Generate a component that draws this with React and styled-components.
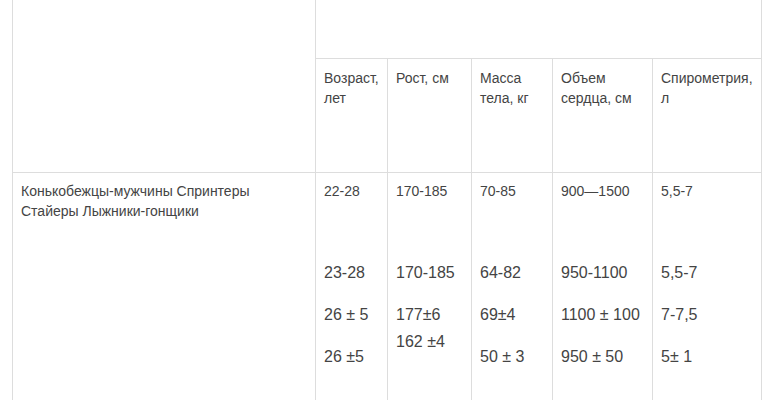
import React from "react";
import styled, { createGlobalStyle } from "styled-components";

const Global = createGlobalStyle`
  html, body { margin: 0; padding: 0; background: #fff; }
  body { font-family: "Liberation Sans", Arial, sans-serif; color: #444; overflow: hidden; }
`;

const Page = styled.div`
  padding-left: 12px;
  height: 400px;
  overflow: hidden;
`;

const Table = styled.div`
  width: 750px;
  box-sizing: border-box;
  border-left: 1px solid #ddd;
  display: grid;
  grid-template-columns: 303px 72px 84px 81px 100px 109px;
  grid-template-rows: 59px 114px auto;
`;

const Cell = styled.div`
  box-sizing: border-box;
  border-right: 1px solid #ddd;
  border-bottom: 1px solid #ddd;
  padding: ${(p) => (p.$data ? "8px 8px" : "9px 8px")};
  font-size: 14px;
  line-height: 20px;
  white-space: nowrap;
  grid-row: ${(p) => p.$row || "auto"};
  grid-column: ${(p) => p.$col || "auto"};
  min-height: ${(p) => (p.$data ? "300px" : "0")};
`;

const Values = styled.div`
  margin-top: 58px;
`;

const Value = styled.p`
  margin: 0 0 15px;
  font-size: 16px;
  line-height: 27px;
`;

const headers = [
  ["Возраст,", "лет"],
  ["Рост, см"],
  ["Масса", "тела, кг"],
  ["Объем", "сердца, см"],
  ["Спирометрия,", "л"],
];

const data = [
  { lead: "22-28", values: [["23-28"], ["26 ± 5"], ["26 ±5"]] },
  { lead: "170-185", values: [["170-185"], ["177±6", "162 ±4"]] },
  { lead: "70-85", values: [["64-82"], ["69±4"], ["50 ± 3"]] },
  { lead: "900—1500", values: [["950-1100"], ["1100 ± 100"], ["950 ± 50"]] },
  { lead: "5,5-7", values: [["5,5-7"], ["7-7,5"], ["5± 1"]] },
];

const Lines = ({ lines }) =>
  lines.map((l, i) => (
    <React.Fragment key={i}>
      {i > 0 && <br />}
      {l}
    </React.Fragment>
  ));

export default function App() {
  return (
    <Page>
      <Global />
      <Table>
        <Cell $row="1 / span 2" $col="1" />
        <Cell $row="1" $col="2 / span 5" />
        {headers.map((h, i) => (
          <Cell key={i} $row="2">
            <Lines lines={h} />
          </Cell>
        ))}
        <Cell $data>
          <Lines lines={["Конькобежцы-мужчины Спринтеры", "Стайеры Лыжники-гонщики"]} />
        </Cell>
        {data.map((d, i) => (
          <Cell key={i} $data>
            {d.lead}
            <Values>
              {d.values.map((v, j) => (
                <Value key={j}>
                  <Lines lines={v} />
                </Value>
              ))}
            </Values>
          </Cell>
        ))}
      </Table>
    </Page>
  );
}
